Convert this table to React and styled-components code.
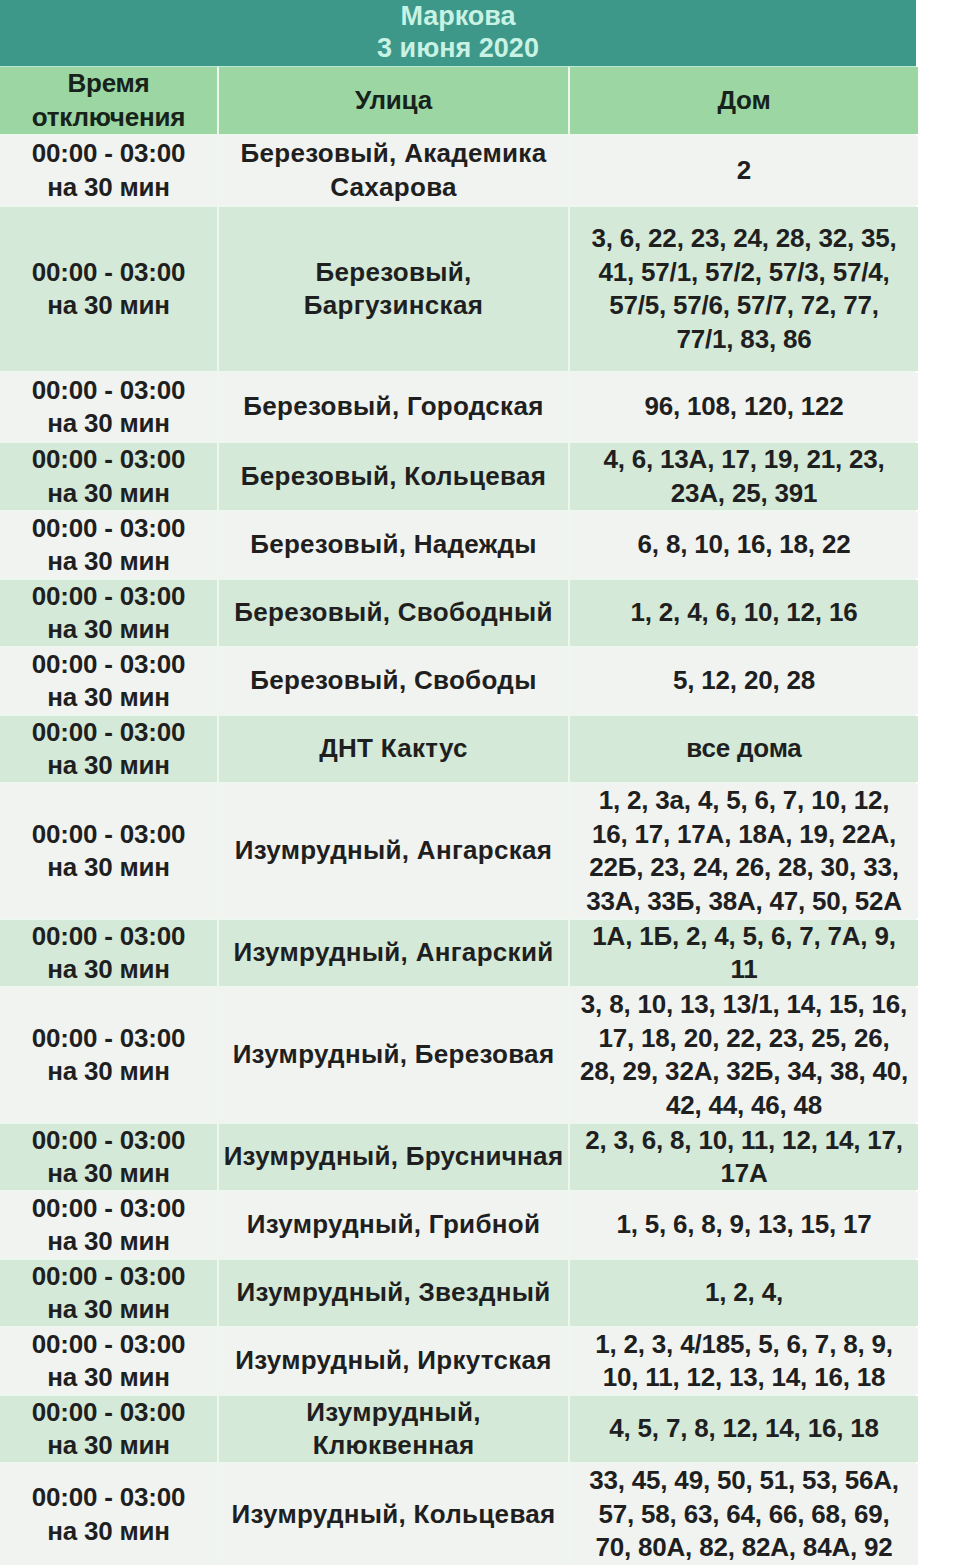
import React from 'react';
import styled, { createGlobalStyle } from 'styled-components';

const GlobalStyle = createGlobalStyle`
  html, body {
    margin: 0;
    padding: 0;
    background: #ffffff;
  }
  body {
    font-family: 'Liberation Sans', Arial, sans-serif;
  }
`;

const Page = styled.div`
  width: 959px;
  height: 1565px;
  overflow: hidden;
  background: #ffffff;
`;

const Table = styled.div`
  width: 916px;
  display: flex;
  flex-direction: column;
  background: #eef6f0;
`;

const Title = styled.div`
  height: 67px;
  background: #3e9889;
  color: #c8f2e4;
  font-size: 27px;
  font-weight: 700;
  line-height: 32px;
  text-align: center;
  display: flex;
  flex-direction: column;
  justify-content: center;
  padding-bottom: 3px;
  box-sizing: border-box;
  border-bottom: 1px solid #bfe8d8;
`;

const Grid = styled.div`
  display: grid;
  grid-template-columns: 217px 349px 348px;
  column-gap: 2px;
  row-gap: 2px;
  background: #eef6f0;
`;

const Cell = styled.div`
  height: ${(p) => p.$h}px;
  display: flex;
  flex-direction: column;
  align-items: center;
  justify-content: center;
  text-align: center;
  font-size: 26px;
  font-weight: 700;
  line-height: 33.5px;
  color: ${(p) => (p.$head ? '#16221a' : '#1f1f1f')};
  letter-spacing: ${(p) => (p.$wide ? '0.3px' : '-0.2px')};
  background: ${(p) => (p.$head ? '#9bd6a3' : p.$alt ? '#d4e9d8' : '#f1f3f1')};
  white-space: nowrap;
`;

const Line = styled.span`
  display: block;
`;

const TIME = ['00:00 - 03:00', 'на 30 мин'];

const rows = [
  { h: 69, street: ['Березовый, Академика', 'Сахарова'], house: ['2'] },
  {
    h: 164,
    street: ['Березовый,', 'Баргузинская'],
    house: ['3, 6, 22, 23, 24, 28, 32, 35,', '41, 57/1, 57/2, 57/3, 57/4,', '57/5, 57/6, 57/7, 72, 77,', '77/1, 83, 86'],
  },
  { h: 68, street: ['Березовый, Городская'], house: ['96, 108, 120, 122'] },
  { h: 67, street: ['Березовый, Кольцевая'], house: ['4, 6, 13А, 17, 19, 21, 23,', '23А, 25, 391'] },
  { h: 66, street: ['Березовый, Надежды'], house: ['6, 8, 10, 16, 18, 22'] },
  { h: 66, street: ['Березовый, Свободный'], house: ['1, 2, 4, 6, 10, 12, 16'] },
  { h: 66, street: ['Березовый, Свободы'], house: ['5, 12, 20, 28'] },
  { h: 66, street: ['ДНТ Кактус'], house: ['все дома'] },
  {
    h: 134,
    street: ['Изумрудный, Ангарская'],
    house: ['1, 2, 3а, 4, 5, 6, 7, 10, 12,', '16, 17, 17А, 18А, 19, 22А,', '22Б, 23, 24, 26, 28, 30, 33,', '33А, 33Б, 38А, 47, 50, 52А'],
  },
  { h: 66, street: ['Изумрудный, Ангарский'], house: ['1А, 1Б, 2, 4, 5, 6, 7, 7А, 9,', '11'] },
  {
    h: 134,
    street: ['Изумрудный, Березовая'],
    house: ['3, 8, 10, 13, 13/1, 14, 15, 16,', '17, 18, 20, 22, 23, 25, 26,', '28, 29, 32А, 32Б, 34, 38, 40,', '42, 44, 46, 48'],
  },
  { h: 66, street: ['Изумрудный, Брусничная'], house: ['2, 3, 6, 8, 10, 11, 12, 14, 17,', '17А'] },
  { h: 66, street: ['Изумрудный, Грибной'], house: ['1, 5, 6, 8, 9, 13, 15, 17'] },
  { h: 66, street: ['Изумрудный, Звездный'], house: ['1, 2, 4,'] },
  { h: 66, street: ['Изумрудный, Иркутская'], house: ['1, 2, 3, 4/185, 5, 6, 7, 8, 9,', '10, 11, 12, 13, 14, 16, 18'] },
  { h: 66, street: ['Изумрудный,', 'Клюквенная'], house: ['4, 5, 7, 8, 12, 14, 16, 18'] },
  {
    h: 101,
    street: ['Изумрудный, Кольцевая'],
    house: ['33, 45, 49, 50, 51, 53, 56А,', '57, 58, 63, 64, 66, 68, 69,', '70, 80А, 82, 82А, 84А, 92'],
  },
];

function Lines({ items }) {
  return items.map((t) => <Line key={t}>{t}</Line>);
}

export default function App() {
  return (
    <Page>
      <GlobalStyle />
      <Table>
        <Title>
          <Line>Маркова</Line>
          <Line>3 июня 2020</Line>
        </Title>
        <Grid>
          <Cell $head $h={67}>
            <Lines items={['Время', 'отключения']} />
          </Cell>
          <Cell $head $h={67}>Улица</Cell>
          <Cell $head $h={67}>Дом</Cell>
          {rows.map((r, i) => (
            <React.Fragment key={r.street.join(' ')}>
              <Cell $h={r.h} $alt={i % 2 === 1}>
                <Lines items={TIME} />
              </Cell>
              <Cell $h={r.h} $alt={i % 2 === 1} $wide>
                <Lines items={r.street} />
              </Cell>
              <Cell $h={r.h} $alt={i % 2 === 1}>
                <Lines items={r.house} />
              </Cell>
            </React.Fragment>
          ))}
        </Grid>
      </Table>
    </Page>
  );
}
